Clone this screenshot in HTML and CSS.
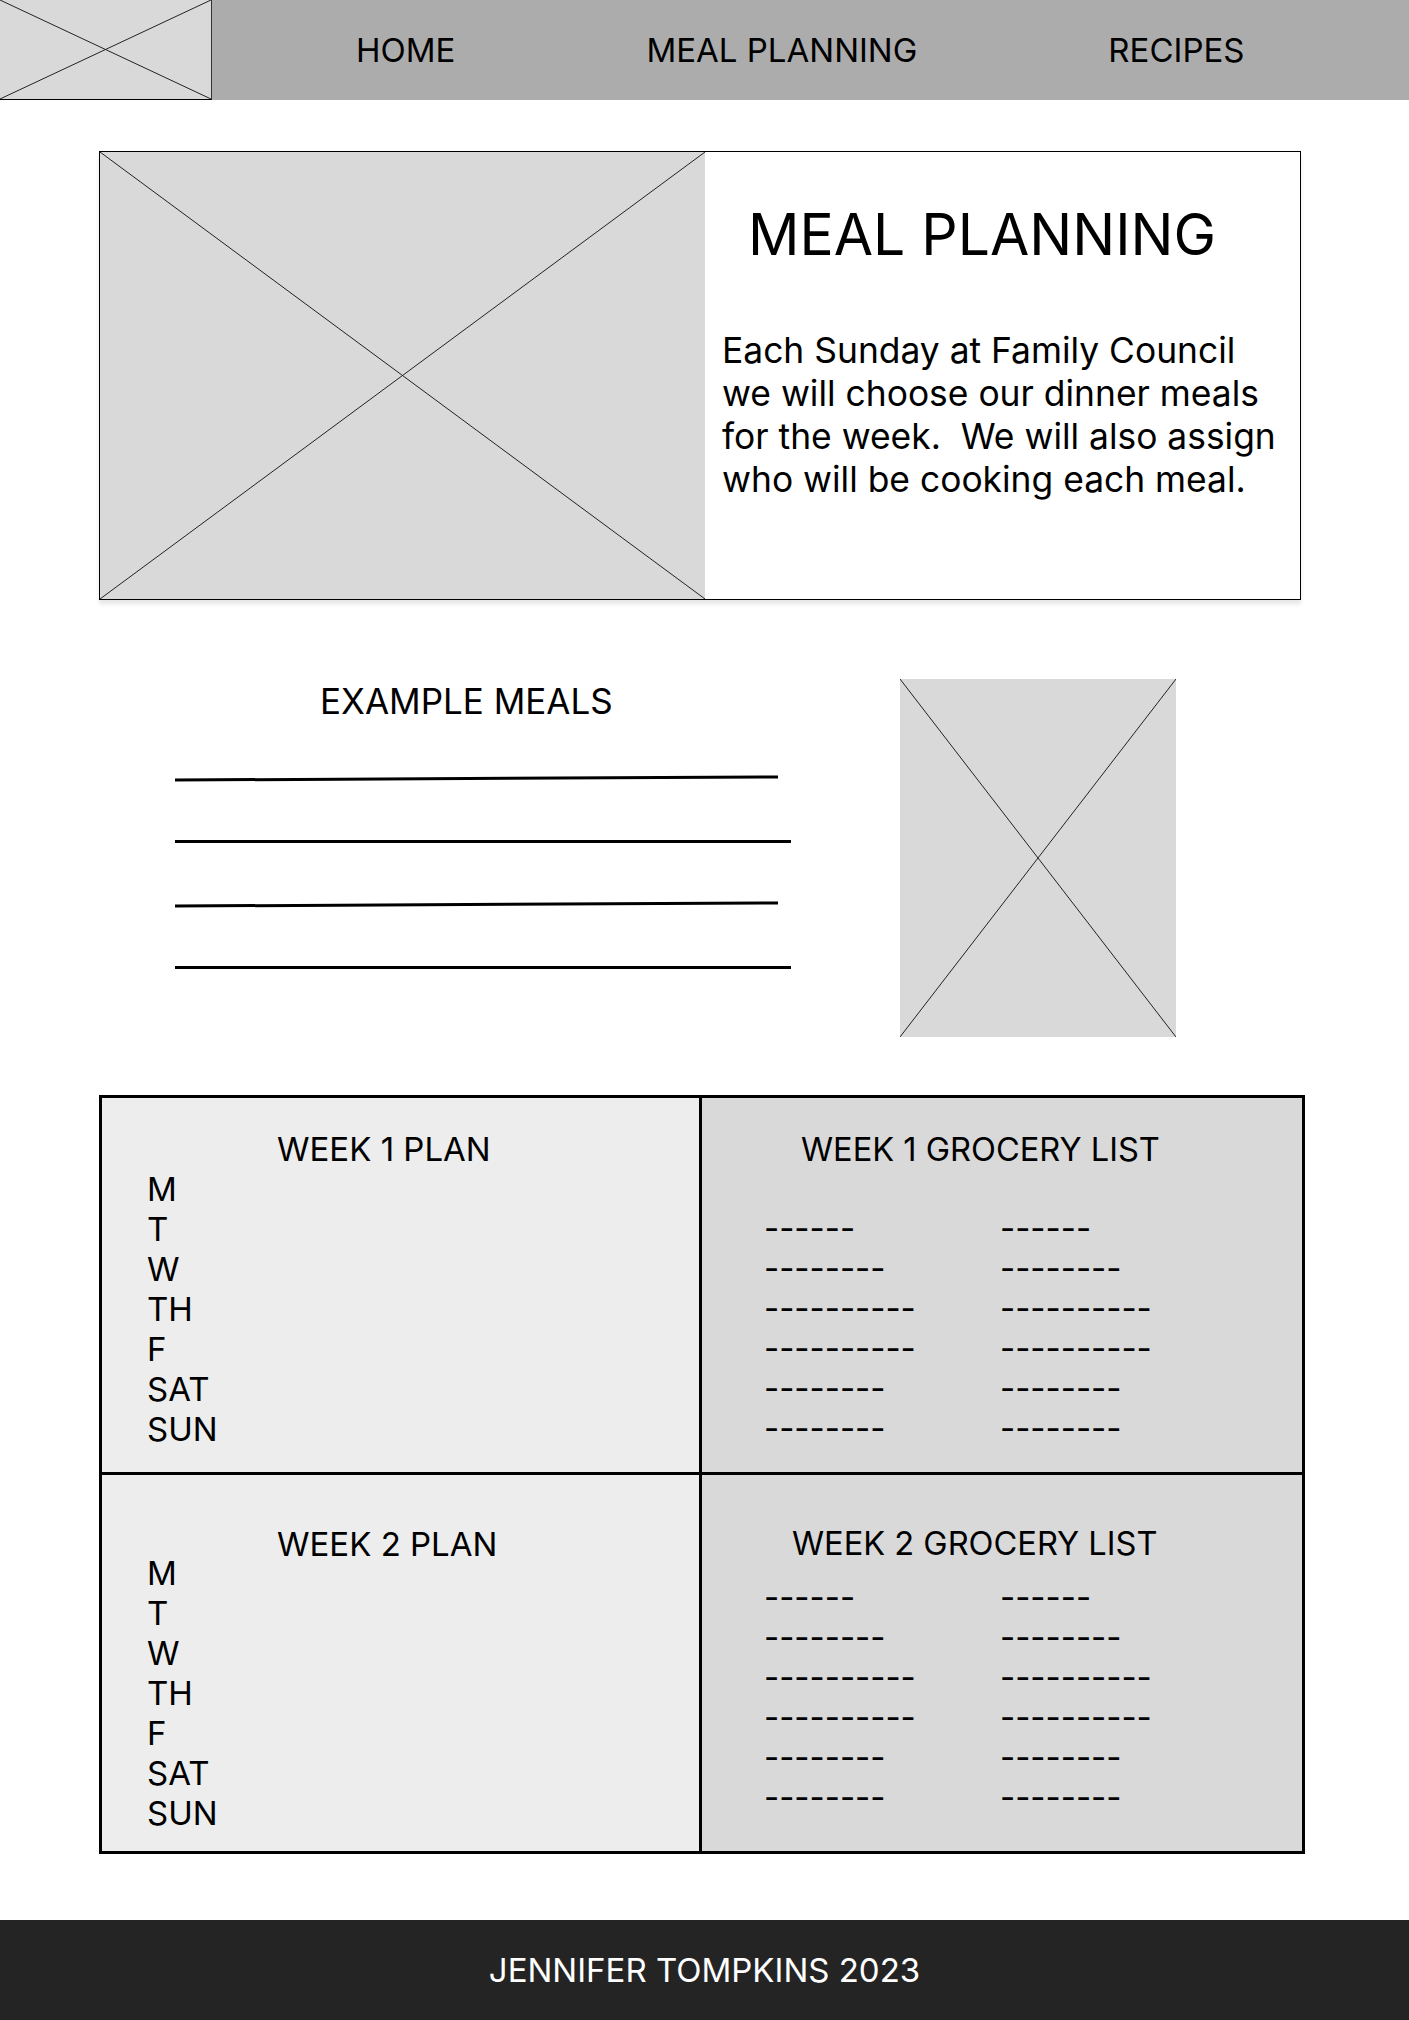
FILE: index.html
```html
<!DOCTYPE html>
<html lang="en">
<head>
    <meta charset="UTF-8">
    <meta name="viewport" content="width=device-width, initial-scale=1.0">
    <title>Meal Planning</title>
    <link rel="stylesheet" href="styles.css">
</head>
<body>

    <!-- Top bar -->
    <header class="topbar">
        <div class="logo placeholder">
            <svg viewBox="0 0 100 100" preserveAspectRatio="none"><line x1="0" y1="0" x2="100" y2="100"/><line x1="100" y1="0" x2="0" y2="100"/></svg>
        </div>
        <nav class="menu">
            <a href="#">HOME</a>
            <a href="#">MEAL PLANNING</a>
            <a href="#">RECIPES</a>
        </nav>
    </header>

    <main class="page">

        <!-- Intro -->
        <section class="intro">
            <div class="intro-pic placeholder">
                <svg viewBox="0 0 100 100" preserveAspectRatio="none"><line x1="0" y1="0" x2="100" y2="100"/><line x1="100" y1="0" x2="0" y2="100"/></svg>
            </div>
            <div class="intro-text">
                <h1>MEAL PLANNING</h1>
                <p>Each Sunday at Family Council<br>we will choose our dinner meals<br>for the week.&nbsp; We will also assign<br>who will be cooking each meal.</p>
            </div>
        </section>

        <!-- Example meals -->
        <section class="examples">
            <div class="examples-list">
                <h2>EXAMPLE MEALS</h2>
                <div class="rule short"></div>
                <div class="rule"></div>
                <div class="rule short"></div>
                <div class="rule"></div>
            </div>
            <div class="examples-pic placeholder">
                <svg viewBox="0 0 100 100" preserveAspectRatio="none"><line x1="0" y1="0" x2="100" y2="100"/><line x1="100" y1="0" x2="0" y2="100"/></svg>
            </div>
        </section>

        <!-- Weekly plans -->
        <section class="weeks">
            <div class="cell plan">
                <h3>WEEK 1 PLAN</h3>
                <div class="days">M<br>T<br>W<br>TH<br>F<br>SAT<br>SUN</div>
            </div>
            <div class="cell grocery">
                <h3>WEEK 1 GROCERY LIST</h3>
                <div class="dashes">
                    <span>------</span><span>------</span>
                    <span>--------</span><span>--------</span>
                    <span>----------</span><span>----------</span>
                    <span>----------</span><span>----------</span>
                    <span>--------</span><span>--------</span>
                    <span>--------</span><span>--------</span>
                </div>
            </div>
            <div class="cell plan second">
                <h3>WEEK 2 PLAN</h3>
                <div class="days">M<br>T<br>W<br>TH<br>F<br>SAT<br>SUN</div>
            </div>
            <div class="cell grocery second">
                <h3>WEEK 2 GROCERY LIST</h3>
                <div class="dashes">
                    <span>------</span><span>------</span>
                    <span>--------</span><span>--------</span>
                    <span>----------</span><span>----------</span>
                    <span>----------</span><span>----------</span>
                    <span>--------</span><span>--------</span>
                    <span>--------</span><span>--------</span>
                </div>
            </div>
        </section>

    </main>

    <footer class="footer">JENNIFER TOMPKINS 2023</footer>

</body>
</html>
```

FILE: styles.css
```css
body {
    margin: 0;
    font-family: "Inter", "Liberation Sans", sans-serif;
    color: #000;
    background-color: #fff;
}

/* placeholder boxes with a cross */
.placeholder {
    background-color: #d9d9d9;
}
.placeholder svg {
    display: block;
    width: 100%;
    height: 100%;
}
.placeholder line {
    stroke: #222;
    stroke-width: 1;
    vector-effect: non-scaling-stroke;
}

/* top bar */
.topbar {
    display: flex;
    height: 100px;
    background-color: #adacac;
}
.logo {
    box-sizing: border-box;
    width: 212px;
    height: 100px;
    border-right: 1px solid #333;
    border-bottom: 1px solid #000;
}
.menu {
    display: flex;
    align-items: center;
    gap: 191px;
    margin-left: 144px;
    padding-bottom: 1px;
}
.menu a {
    color: #000;
    text-decoration: none;
    font-size: 33px;
}

/* page */
.page {
    padding-left: 99px;
}

.intro {
    display: flex;
    box-sizing: border-box;
    width: 1202px;
    height: 449px;
    margin-top: 51px;
    border: 1px solid #000;
    box-shadow: 0 4px 4px rgba(0, 0, 0, 0.1);
}
.intro-pic {
    width: 605px;
    height: 100%;
}
.intro-text {
    padding: 48px 0 0 17px;
    white-space: nowrap;
}
.intro-text h1 {
    margin: 0 0 0 26px;
    font-size: 57px;
    font-weight: 400;
}
.intro-text p {
    margin: 60px 0 0;
    font-size: 35.4px;
    line-height: 43px;
}

.examples {
    display: flex;
    align-items: flex-start;
    margin-top: 79px;
    padding-left: 76px;
}
.examples-list {
    width: 616px;
    padding-top: 1px;
}
.examples-list h2 {
    margin: 0 0 55px 145px;
    font-size: 35px;
    font-weight: 400;
}
.rule {
    height: 3px;
    margin-bottom: 60px;
    background-color: #000;
}
.rule.short {
    width: 603px;
    transform: rotate(-0.29deg);
}
.examples-pic {
    width: 276px;
    height: 358px;
    margin-left: 109px;
}

/* weekly tables */
.weeks {
    display: grid;
    grid-template-columns: 597px 600px;
    grid-template-rows: 374px 376px;
    gap: 3px;
    width: 1200px;
    margin-top: 58px;
    padding: 3px;
    background-color: #000;
    font-size: 33px;
    line-height: 40px;
}
.cell h3 {
    margin: 0;
    font-size: 33px;
    font-weight: 400;
}
.plan {
    padding: 31px 0 0 45px;
    background-color: #ededed;
}
.plan h3 {
    margin-left: 130px;
}
.plan.second {
    padding-top: 49px;
}
.plan.second h3 {
    margin-bottom: -11px;
}
.grocery {
    padding-top: 31px;
    background-color: #d9d9d9;
}
.grocery h3 {
    padding-left: 99px;
    font-size: 32.6px;
}
.dashes {
    display: grid;
    grid-template-columns: 236px auto;
    margin: 39px 0 0 62px;
}
.grocery.second {
    padding-top: 48px;
}
.grocery.second h3 {
    padding-left: 90px;
}
.grocery.second .dashes {
    margin-top: 14px;
}

/* footer */
.footer {
    height: 100px;
    margin-top: 66px;
    background-color: #242424;
    color: #fff;
    font-size: 33px;
    line-height: 100px;
    text-align: center;
}
```
